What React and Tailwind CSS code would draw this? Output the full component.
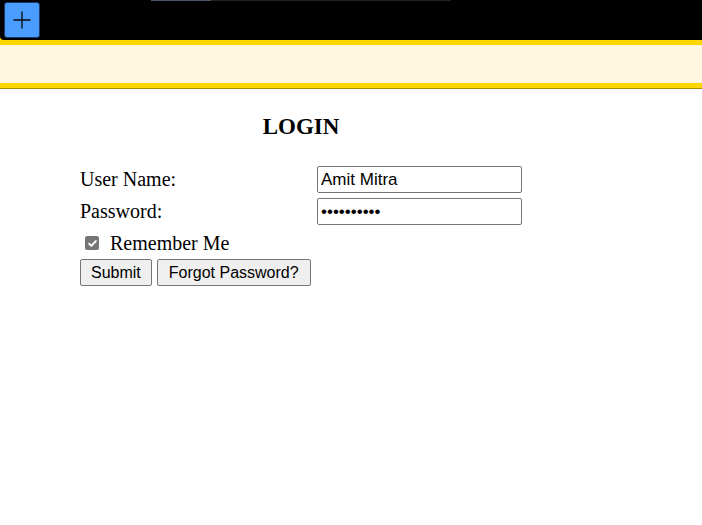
import { useState } from 'react'

const serif = { fontFamily: '"Liberation Serif", "Times New Roman", serif' }
const sans = { fontFamily: '"Liberation Sans", Arial, sans-serif' }

function PlusButton() {
    return (
        <button className="ml-1 flex h-[36px] w-[36px] items-center justify-center rounded-[3px] border border-[#1d3a66] bg-[#4a9dff]">
            <svg width="20" height="20" viewBox="0 0 20 20" fill="none" stroke="#0b0b0b" strokeWidth="1.3">
                <path d="M10 1.5v17M1.5 10h17" />
            </svg>
        </button>
    )
}

function CheckMark() {
    return (
        <span className="flex h-[14px] w-[14px] items-center justify-center rounded-[2px] bg-[#767676]">
            <svg width="11" height="11" viewBox="0 0 10 10" fill="none" stroke="#fff" strokeWidth="1.8" strokeLinecap="round" strokeLinejoin="round">
                <path d="M2 5.2l2 2 4-4.4" />
            </svg>
        </span>
    )
}

export default function App() {
    const [user, setUser] = useState('Amit Mitra')
    const [pass, setPass] = useState('mitra12345')

    return (
        <div className="min-h-[525px] w-full bg-white" style={serif}>
            {/* top bar + banner */}
            <div className="bg-[#ffd700]">
                <header className="flex h-[40px] flex-col rounded-bl-[4px] bg-black">
                    <div className="flex h-[1px]">
                        <span className="ml-[151px] w-[60px] bg-[#4b5563]" />
                        <span className="w-[240px] bg-[#222]" />
                    </div>
                    <div className="pt-[1px]">
                        <PlusButton />
                    </div>
                </header>
                <div className="h-[48px] border-y-[5px] border-[#ffd700] bg-[#fff8df]" />
            </div>
            <div className="h-[1px] bg-[#a89000]" />

            {/* login form */}
            <div className="ml-[80px] w-[442px] pt-[24px]">
                <h3 className="text-center text-[23px] font-bold leading-[27px] text-black">LOGIN</h3>
                <div className="mt-[26px] grid grid-cols-[237px_205px] gap-y-[5px] text-[20px] text-black">
                    <label className="flex h-[27px] items-center pb-[1px] leading-[24px]">User Name:</label>
                    <input
                        value={user}
                        onChange={e => setUser(e.target.value)}
                        className="h-[27px] rounded-[2px] border border-[#767676] px-[3px] text-[17px] text-black outline-none"
                        style={sans}
                    />
                    <label className="flex h-[27px] items-center pb-[1px] leading-[24px]">Password:</label>
                    <input
                        type="password"
                        value={pass}
                        onChange={e => setPass(e.target.value)}
                        className="h-[27px] rounded-[2px] border border-[#767676] px-[3px] text-[17px] text-black outline-none"
                        style={sans}
                    />
                </div>
                <div className="mt-[5px] flex items-center gap-[11px] pl-[5px] text-[20px] leading-[26px]">
                    <CheckMark />
                    <span>Remember Me</span>
                </div>
                <div className="mt-[3px] flex gap-[5px] text-[16px]" style={sans}>
                    <button className="h-[27px] rounded-[2px] border border-[#767676] bg-[#efefef] px-[10px] text-black">Submit</button>
                    <button className="h-[27px] rounded-[2px] border border-[#767676] bg-[#efefef] px-[11px] text-black">Forgot Password?</button>
                </div>
            </div>
        </div>
    )
}
